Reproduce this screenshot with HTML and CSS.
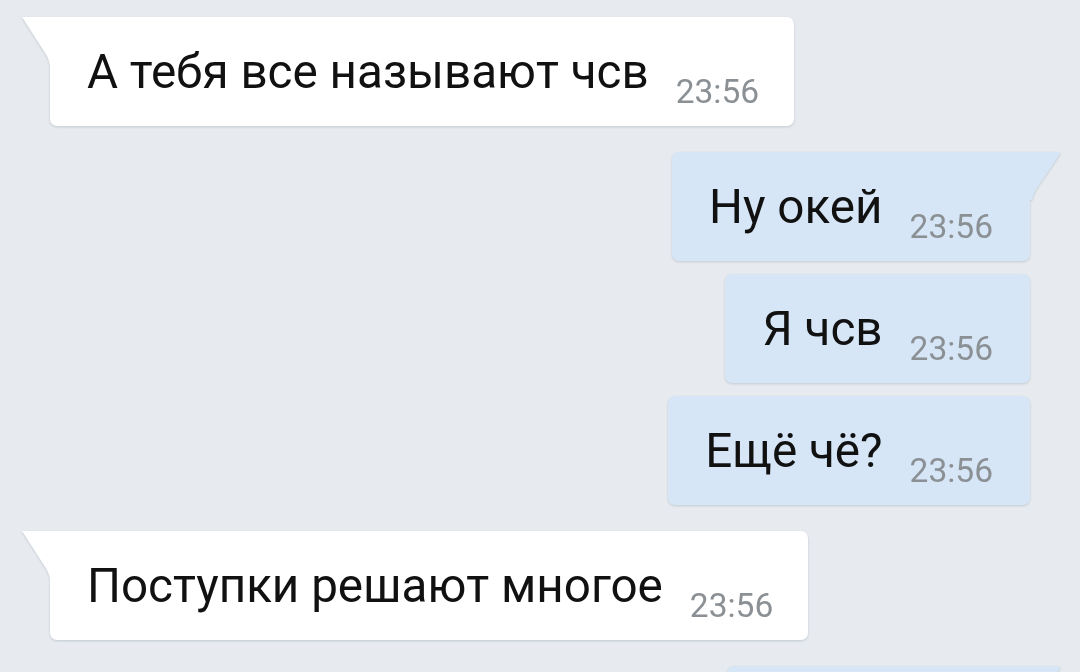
FILE: index.html
```html
<!DOCTYPE html>
<html lang="ru">
<head>
  <meta charset="UTF-8">
  <title>Диалог</title>
  <link rel="stylesheet" href="styles.css">
</head>
<body>
  <div class="chat">
    <div class="msg in first">
      <span class="text">А тебя все называют чсв</span>
      <span class="time">23:56</span>
    </div>

    <div class="msg out first">
      <span class="text">Ну окей</span>
      <span class="time">23:56</span>
    </div>
    <div class="msg out">
      <span class="text">Я чсв</span>
      <span class="time">23:56</span>
    </div>
    <div class="msg out">
      <span class="text">Ещё чё?</span>
      <span class="time">23:56</span>
    </div>

    <div class="msg in first">
      <span class="text">Поступки решают многое</span>
      <span class="time">23:56</span>
    </div>

    <!-- next bubble, only its top edge is on screen -->
    <div class="msg out first stub"></div>
  </div>
</body>
</html>
```

FILE: styles.css
```css
body {
  margin: 0;
  background: #e7ebef;
  font-family: Roboto, "Noto Sans", Arial, sans-serif;
  overflow: hidden;
}

.chat {
  display: flex;
  flex-direction: column;
  padding: 17px 50px 0 50px;
}

.msg {
  position: relative;
  display: flex;
  align-items: flex-start;
  gap: 27px;
  height: 109px;
  box-sizing: border-box;
  padding: 27px 35px 0 37px;
  border-radius: 7px;
  margin-top: 13px;
  filter: drop-shadow(0 1px 1px rgba(60, 80, 100, 0.22));
}

.msg.first {
  margin-top: 26px;
}

.chat .msg:first-child {
  margin-top: 0;
}

.msg.in {
  align-self: flex-start;
  background: #fff;
  border-top-left-radius: 0;
}

.msg.out {
  align-self: flex-end;
  background: #d6e6f6;
  padding-right: 37px;
}

.msg.out.first {
  border-top-right-radius: 0;
}

.msg.stub {
  width: 303px;
}

.msg.first::before {
  content: "";
  position: absolute;
  top: 0;
  width: 30px;
  height: 48px;
}

.msg.in.first::before {
  left: -28px;
  background: #fff;
  clip-path: polygon(0 0, 100% 0, 100% 100%, 28px 100%, 27px 44px, 25px 39px);
}

.msg.out.first::before {
  right: -30px;
  background: #d6e6f6;
  clip-path: polygon(0 0, 99% 0, 100% 2px, 5px 39px, 3px 44px, 2px 100%, 0 100%);
}

.text {
  font-size: 47.6px;
  line-height: 56px;
  color: #111;
  white-space: nowrap;
}

.time {
  margin-top: 28px;
  font-size: 33.5px;
  line-height: 39px;
  color: #8b9095;
}
```
